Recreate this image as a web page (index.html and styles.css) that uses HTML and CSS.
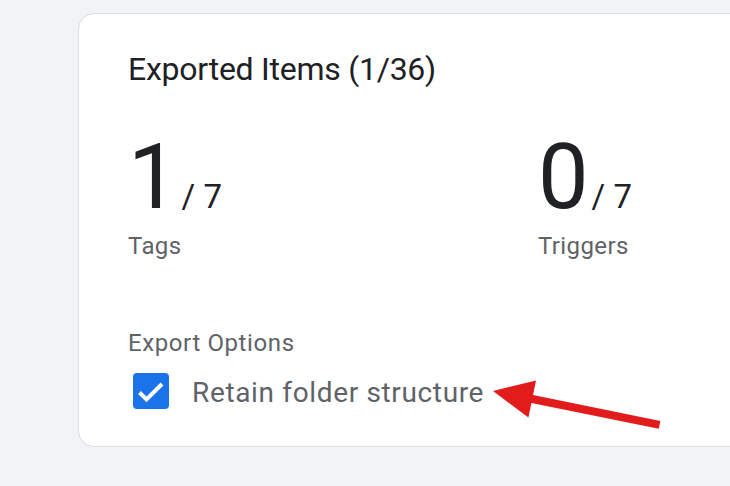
FILE: index.html
```html
<!DOCTYPE html>
<html lang="en">
<head>
<meta charset="utf-8">
<title>Exported Items</title>
<link rel="stylesheet" href="styles.css">
</head>
<body>
<div class="card">
  <h2 class="title">Exported Items (1/36)</h2>
  <div class="stats">
    <div class="stat">
      <div class="count"><span class="num">1</span><span class="total">/ 7</span></div>
      <div class="label">Tags</div>
    </div>
    <div class="stat">
      <div class="count"><span class="num">0</span><span class="total">/ 7</span></div>
      <div class="label">Triggers</div>
    </div>
  </div>
  <div class="options-title">Export Options</div>
  <label class="option">
    <span class="checkbox">
      <svg viewBox="0 0 36 36" width="36" height="36"><rect x="0" y="0" width="36" height="36" rx="4" fill="#1a73e8"/><polyline points="6.5,19.5 13.5,26.5 29,11" fill="none" stroke="#fff" stroke-width="4"/></svg>
    </span>
    <span class="option-text">Retain folder structure</span>
  </label>
</div>
<svg class="annotation" viewBox="0 0 730 486" width="730" height="486">
  <polygon fill="#e21b1b" points="493,391 536,380.4 533,395.1 660.4,421 658.8,428.8 531.4,402.9 528.4,417.6"/>
</svg>
</body>
</html>
```

FILE: styles.css
```css
html, body {
  margin: 0;
  padding: 0;
}
body {
  background: #f1f3f4;
  font-family: Roboto, "Liberation Sans", Arial, sans-serif;
  width: 730px;
  height: 486px;
  overflow: hidden;
  position: relative;
}
.card {
  margin: 13px 0 0 78px;
  width: 684px;
  height: 434px;
  background: #fff;
  border: 1px solid #dadce0;
  border-radius: 16px;
  padding: 35px 0 0 49px;
  box-sizing: border-box;
  overflow: hidden;
}
.title {
  margin: 0;
  font-weight: 400;
  font-size: 32px;
  line-height: 40px;
  letter-spacing: -0.25px;
  color: #202124;
}
.stats {
  display: flex;
  margin-top: 42px;
}
.stat {
  flex: 0 0 auto;
}
.stat:first-child {
  width: 410px;
}
.count {
  display: flex;
  align-items: baseline;
  line-height: 94px;
  height: 94px;
  color: #202124;
}
.num {
  font-size: 90px;
}
.total {
  font-size: 33px;
  margin-left: 3px;
}
.label {
  margin-top: 7px;
  font-size: 24px;
  line-height: 28px;
  letter-spacing: 0.4px;
  color: #5f6368;
}
.options-title {
  margin-top: 69px;
  font-size: 24px;
  line-height: 28px;
  letter-spacing: 0.6px;
  color: #5f6368;
}
.option {
  display: flex;
  align-items: center;
  margin-top: 14px;
}
.checkbox {
  display: block;
  width: 36px;
  height: 36px;
  margin-left: 5px;
}
.checkbox svg {
  display: block;
}
.option-text {
  margin-left: 23px;
  padding-top: 4px;
  font-size: 28px;
  line-height: 36px;
  letter-spacing: 0.65px;
  color: #5f6368;
}
.annotation {
  position: absolute;
  left: 0;
  top: 0;
  pointer-events: none;
}
```
